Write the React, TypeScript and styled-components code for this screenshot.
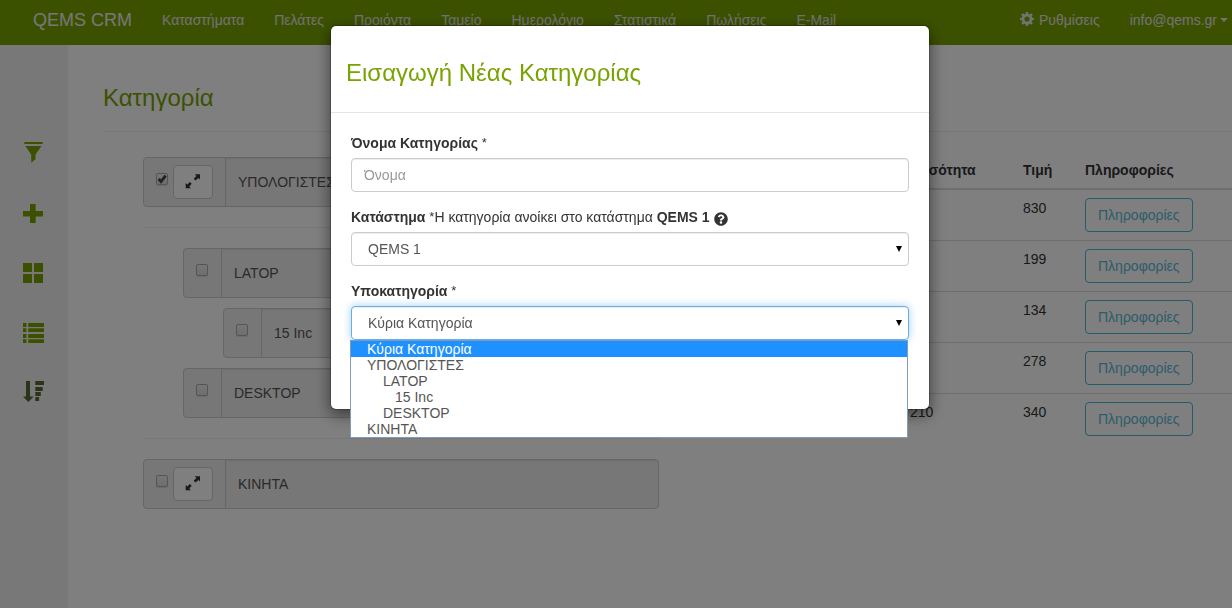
import React from "react";
import styled, { createGlobalStyle, css } from "styled-components";
import { FaQuestionCircle } from "react-icons/fa";

const GlobalStyle = createGlobalStyle`
  *, *::before, *::after { box-sizing: border-box; }
  body {
    margin: 0;
    background: #fff;
    color: #333;
    font: 14px/20px "Liberation Sans", Arial, sans-serif;
  }
  button, input, select { font: inherit; }
`;

const green = "#78a300";

const Page = styled.div`
  display: flex;
  flex-direction: column;
  min-height: 100vh;
`;

/* ---------- Navigation ---------- */

const Navbar = styled.nav`
  display: flex;
  justify-content: space-between;
  padding: 10px 4px 15px 18px;
  background: ${green};
  white-space: nowrap;
`;

const NavGroup = styled.div`
  display: flex;
`;

const Brand = styled.a`
  padding: 0 15px;
  color: #eee;
  font-size: 18px;
  text-decoration: none;
`;

const NavLink = styled.a<{ $last?: boolean }>`
  display: flex;
  align-items: center;
  gap: 3px;
  padding: 0 ${(p) => (p.$last ? 0 : 15)}px 0 15px;
  color: #e4e4e4;
  text-decoration: none;
`;

const Caret = styled.span`
  border: 4px solid transparent;
  border-top-color: currentColor;
  border-bottom: 0;
`;

/* ---------- Body ---------- */

const Body = styled.div`
  display: flex;
  flex: 1;
`;

const Sidebar = styled.aside`
  display: flex;
  flex-direction: column;
  align-items: center;
  gap: 36px;
  flex: 0 0 68px;
  padding-top: 96px;
  background: #f0f0f0;
`;

const ToolButton = styled.button<{ $dark?: boolean }>`
  display: block;
  height: 24px;
  padding: 0;
  border: 0;
  background: none;
  color: ${(p) => (p.$dark ? "#566633" : green)};
  svg { display: block; }
`;

const Content = styled.main`
  flex: 1;
  min-width: 0;
  padding: 40px 0 40px 35px;
`;

const PageTitle = styled.h3`
  margin: 0;
  color: ${green};
  font-size: 24px;
  font-weight: 400;
  line-height: 26px;
`;

const Rule = styled.hr`
  height: 1px;
  margin: 20px 0;
  border: 0;
  background: #eee;
`;

const Columns = styled.div`
  display: grid;
  grid-template-columns: minmax(0, 556fr) minmax(0, 543fr);
  gap: 30px;
`;

/* ---------- Category tree ---------- */

const Tree = styled.ul`
  margin: 0;
  padding: 5px 0 0 40px;
  list-style: none;
`;

const Branch = styled.ul`
  display: grid;
  gap: 10px;
  margin: 0;
  padding: 0 0 0 40px;
  list-style: none;
  ul { margin-top: 10px; }
`;

const ItemBox = styled.div`
  display: flex;
  height: 50px;
  overflow: hidden;
  border: 1px solid #ccc;
  border-radius: 4px;
  background: #eee;
`;

const Addon = styled.div`
  display: flex;
  align-items: center;
  gap: 4px;
  padding: 0 12px;
`;

const ItemName = styled.label`
  display: flex;
  align-items: center;
  flex: 1;
  padding: 0 12px;
  border-left: 1px solid #ccc;
  box-shadow: inset 0 1px 1px rgba(0, 0, 0, 0.075);
  color: #555;
`;

const CheckWrap = styled.span`
  position: relative;
  width: 13px;
  height: 13px;
  margin-bottom: 5px;
  svg {
    position: absolute;
    inset: 0;
    pointer-events: none;
  }
`;

const CheckInput = styled.input`
  display: block;
  appearance: none;
  width: 12px;
  height: 12px;
  margin: 0;
  border: 1px solid #aaa;
  border-radius: 2px;
  background: linear-gradient(#eee, #dcdcdc);
  box-shadow: 0 1px 1px rgba(0, 0, 0, 0.1);
`;

const ExpandButton = styled.button`
  display: grid;
  place-items: center;
  width: 40px;
  height: 34px;
  padding: 0;
  border: 1px solid #ccc;
  border-radius: 4px;
  background: #fff;
  color: #333;
`;

/* ---------- Product table ---------- */

const ProductTable = styled.table`
  width: 100%;
  align-self: start;
  table-layout: fixed;
  border-collapse: separate;
  border-spacing: 0;
`;

const Col = styled.col<{ $width?: number }>`
  width: ${(p) => (p.$width ? `${p.$width}px` : "auto")};
`;

const HeadCell = styled.th`
  padding: 8px;
  border-bottom: 2px solid #ddd;
  text-align: left;
`;

const Cell = styled.td`
  padding: 8px;
  vertical-align: top;
  tr + tr > & { border-top: 1px solid #ddd; }
`;

const InfoButton = styled.button`
  display: block;
  height: 34px;
  padding: 0 12px;
  border: 1px solid #46b8da;
  border-radius: 4px;
  background: transparent;
  color: #5bb8d8;
`;

/* ---------- Dialog ---------- */

const Backdrop = styled.div`
  position: fixed;
  inset: 0;
  display: flex;
  justify-content: center;
  align-items: flex-start;
  padding: 25px 0 0 28px;
  background: rgba(0, 0, 0, 0.5);
`;

const Dialog = styled.section`
  width: 600px;
  max-width: 100%;
  border: 1px solid rgba(0, 0, 0, 0.2);
  border-radius: 6px;
  background: #fff;
  background-clip: padding-box;
  box-shadow: 0 5px 15px rgba(0, 0, 0, 0.5);
`;

const DialogHeader = styled.header`
  padding: 34px 15px 26px;
  border-bottom: 1px solid #e5e5e5;
`;

const DialogForm = styled.form`
  display: grid;
  gap: 15px;
  padding: 20px 20px 69px;
`;

const Field = styled.div`
  display: grid;
  gap: 5px;
`;

const FieldLabel = styled.label`
  display: flex;
  align-items: center;
  white-space: pre;
  svg { margin: 3px 0 0 4px; }
`;

const Star = styled.span`
  font-size: 13px;
`;

const controlStyle = css`
  display: block;
  width: 100%;
  height: 34px;
  padding: 0 12px;
  border: 1px solid #ccc;
  border-radius: 4px;
  outline: 0;
  background: #fff;
  box-shadow: inset 0 1px 1px rgba(0, 0, 0, 0.075);
  color: #555;
`;

const TextInput = styled.input`
  ${controlStyle}
  &::placeholder { color: #999; opacity: 1; }
`;

const SelectWrap = styled.div`
  position: relative;
`;

const Select = styled.select<{ $open?: boolean }>`
  ${controlStyle}
  appearance: none;
  padding: 0 16px;
  ${(p) =>
    p.$open &&
    css`
      border-color: #66afe9;
      box-shadow: inset 0 1px 1px rgba(0, 0, 0, 0.075), 0 0 8px rgba(102, 175, 233, 0.6);
    `}
`;

const SelectArrow = styled.svg`
  position: absolute;
  top: 14px;
  right: 7px;
  pointer-events: none;
`;

const OptionList = styled.ul`
  position: absolute;
  top: 100%;
  left: -1px;
  right: 1px;
  margin: 0;
  padding: 0;
  border: 1px solid #7f9db9;
  background: #fff;
  color: #555;
  line-height: 16px;
  list-style: none;
`;

const Option = styled.li<{ $indent: number; $active?: boolean }>`
  padding-left: ${(p) => 16 + p.$indent}px;
  ${(p) => p.$active && "background: #1e90ff; color: #fff;"}
`;

/* ---------- Icons ---------- */

const Icon = ({ size, children }: { size: number; children: React.ReactNode }) => (
  <svg width={size} height={size} viewBox={`0 0 ${size} ${size}`} fill="currentColor" aria-hidden="true">
    {children}
  </svg>
);

const CogIcon = () => (
  <Icon size={16}>
    <circle cx="7" cy="7" r="3.9" fill="none" stroke="currentColor" strokeWidth="2.600" />
    {[0, 45, 90, 135, 180, 225, 270, 315].map((a) => (
      <path key={a} d="M5.900 0h2.200l0.500 2.800h-3.200z" transform={`rotate(${a} 7 7)`} />
    ))}
  </Icon>
);

const ExpandIcon = () => (
  <Icon size={16}>
    <path d="M9.800 0.200H15V5.400L13.400 3.900L10.500 6.500L8.700 4.800L11.400 1.900Z" />
    <path d="M5.900 14.200H0.700V9L2.300 10.500L4.900 8L6.700 9.700L4.300 12.500Z" />
  </Icon>
);

const CheckMark = () => (
  <svg width="13" height="13" viewBox="0 0 13 13" aria-hidden="true">
    <path d="M2.600 6L5 8.500L9.600 2.600" fill="none" stroke="#444" strokeWidth="2.800" />
  </svg>
);

const tools = [
  { name: "Φίλτρο", shape: <path d="M2.3 1H20.7V3H2.3ZM3.3 5H19.5L13.5 13.4V18.3L9.2 21.7V13.4Z" /> },
  { name: "Προσθήκη", shape: <path d="M8 3h5.7v7H21v5.5h-7.3V22H8v-6.5H1V10h7z" /> },
  { name: "Πλέγμα", shape: <path d="M1 2h9v9H1zM12 2h9v9h-9zM1 13h9v9H1zM12 13h9v9h-9z" /> },
  {
    name: "Λίστα",
    shape: <path d="M1 2h3.4v4H1zM6.2 2H22v4H6.2zM1 7.3h3.4V11H1zM6.2 7.3H22V11H6.2zM1 13h3.4v4H1zM6.2 13H22v4H6.2zM1 18.2h3.4V22H1zM6.2 18.2H22V22H6.2z" />,
  },
  {
    name: "Ταξινόμηση",
    dark: true,
    shape: <path d="M4 0h4v15.6h3.7L6.3 21L1 15.6h3zM13.3 0H22v4h-8.700zM13.3 6h7.400v4h-7.400zM13.3 11h5.500v4h-5.500zM13.3 16h3.800v4h-3.800z" />,
  },
];

/* ---------- Data ---------- */

const navItems = ["Καταστήματα", "Πελάτες", "Προιόντα", "Ταμείο", "Ημερολόγιο", "Στατιστικά", "Πωλήσεις", "E-Mail"];

const products = [
  { quantity: "", price: 830 },
  { quantity: "", price: 199 },
  { quantity: "", price: 134 },
  { quantity: "", price: 278 },
  { quantity: "210", price: 340 },
];

const categories = [
  { name: "Κύρια Κατηγορία", indent: 0, active: true },
  { name: "ΥΠΟΛΟΓΙΣΤΕΣ", indent: 0 },
  { name: "LATOP", indent: 16 },
  { name: "15 Inc", indent: 28 },
  { name: "DESKTOP", indent: 16 },
  { name: "ΚΙΝΗΤΑ", indent: 0 },
];

type ItemProps = { id: string; name: string; checked?: boolean; expandable?: boolean };

const TreeItem = ({ id, name, checked, expandable }: ItemProps) => (
  <ItemBox>
    <Addon>
      <CheckWrap>
        <CheckInput type="checkbox" id={id} defaultChecked={checked} />
        {checked && <CheckMark />}
      </CheckWrap>
      {expandable && (
        <ExpandButton type="button" aria-label={`Ανάπτυξη ${name}`}>
          <ExpandIcon />
        </ExpandButton>
      )}
    </Addon>
    <ItemName htmlFor={id}>{name}</ItemName>
  </ItemBox>
);

export default function App() {
  return (
    <>
      <GlobalStyle />
      <Page>
        <Navbar>
          <NavGroup>
            <Brand href="#">QEMS CRM</Brand>
            {navItems.map((item) => (
              <NavLink href="#" key={item}>{item}</NavLink>
            ))}
          </NavGroup>
          <NavGroup>
            <NavLink href="#"><CogIcon />Ρυθμίσεις</NavLink>
            <NavLink href="#" $last>info@qems.gr<Caret /></NavLink>
          </NavGroup>
        </Navbar>

        <Body>
          <Sidebar>
            {tools.map((tool) => (
              <ToolButton key={tool.name} type="button" aria-label={tool.name} $dark={tool.dark}>
                <Icon size={24}>{tool.shape}</Icon>
              </ToolButton>
            ))}
          </Sidebar>

          <Content>
            <PageTitle>Κατηγορία</PageTitle>
            <Rule />
            <Columns>
              <Tree>
                <li>
                  <TreeItem id="computers" name="ΥΠΟΛΟΓΙΣΤΕΣ" checked expandable />
                  <Rule />
                  <Branch>
                    <li>
                      <TreeItem id="laptop" name="LATOP" />
                      <Branch>
                        <li><TreeItem id="inch15" name="15 Inc" /></li>
                      </Branch>
                    </li>
                    <li><TreeItem id="desktop" name="DESKTOP" /></li>
                  </Branch>
                  <Rule />
                </li>
                <li><TreeItem id="mobiles" name="ΚΙΝΗΤΑ" expandable /></li>
              </Tree>

              <ProductTable>
                <colgroup>
                  <Col />
                  <Col $width={113} />
                  <Col $width={62} />
                  <Col $width={155} />
                </colgroup>
                <thead>
                  <tr>
                    <HeadCell />
                    <HeadCell>Ποσότητα</HeadCell>
                    <HeadCell>Τιμή</HeadCell>
                    <HeadCell>Πληροφορίες</HeadCell>
                  </tr>
                </thead>
                <tbody>
                  {products.map((product) => (
                    <tr key={product.price}>
                      <Cell />
                      <Cell>{product.quantity}</Cell>
                      <Cell>{product.price}</Cell>
                      <Cell><InfoButton type="button">Πληροφορίες</InfoButton></Cell>
                    </tr>
                  ))}
                </tbody>
              </ProductTable>
            </Columns>
          </Content>
        </Body>
      </Page>

      <Backdrop>
        <Dialog role="dialog" aria-modal="true" aria-labelledby="dialog-title">
          <DialogHeader>
            <PageTitle id="dialog-title">Εισαγωγή Νέας Κατηγορίας</PageTitle>
          </DialogHeader>
          <DialogForm>
            <Field>
              <FieldLabel htmlFor="name"><b>Όνομα Κατηγορίας </b> <Star>*</Star></FieldLabel>
              <TextInput id="name" type="text" placeholder="Όνομα" />
            </Field>
            <Field>
              <FieldLabel htmlFor="store">
                <b>Κατάστημα </b><Star>*</Star>Η κατηγορία ανοίκει στο κατάστημα <b>QEMS 1</b>
                <FaQuestionCircle size={14} aria-hidden="true" />
              </FieldLabel>
              <SelectWrap>
                <Select id="store"><option>QEMS 1</option></Select>
                <SelectArrow width="6" height="6" viewBox="0 0 6 6"><path d="M0 0h6L3 6z" /></SelectArrow>
              </SelectWrap>
            </Field>
            <Field>
              <FieldLabel htmlFor="parent"><b>Υποκατηγορία </b><Star>*</Star></FieldLabel>
              <SelectWrap>
                <Select id="parent" $open><option>Κύρια Κατηγορία</option></Select>
                <SelectArrow width="6" height="6" viewBox="0 0 6 6"><path d="M0 0h6L3 6z" /></SelectArrow>
                <OptionList role="listbox" aria-label="Υποκατηγορία">
                  {categories.map((c) => (
                    <Option key={c.name} role="option" aria-selected={!!c.active} $indent={c.indent} $active={c.active}>
                      {c.name}
                    </Option>
                  ))}
                </OptionList>
              </SelectWrap>
            </Field>
          </DialogForm>
        </Dialog>
      </Backdrop>
    </>
  );
}
